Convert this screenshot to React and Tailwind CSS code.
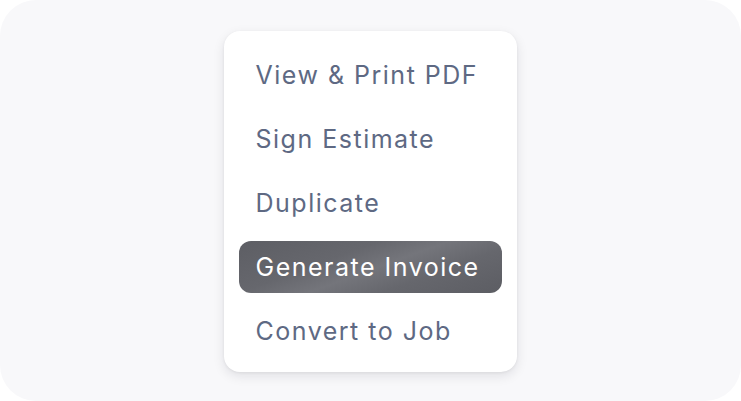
export default function App() {
  const items = ["View & Print PDF", "Sign Estimate", "Duplicate", "Generate Invoice", "Convert to Job"];
  return (
    <div className="w-[741px] h-[401px] bg-white">
      <div className="w-full h-full rounded-[36px] bg-[#f8f8fa] flex justify-center pt-[31px]" style={{ fontFamily: "Inter, 'Noto Sans', sans-serif" }}>
        <div className="w-[293px] h-[341px] ml-[-1px] bg-white rounded-[16px] shadow-[0_4px_12px_rgba(20,20,40,0.10),0_1px_3px_rgba(20,20,40,0.06)] px-[15px] pt-[12px] pb-[9px] flex flex-col">
          {items.map((t) => (
            <div key={t} className="h-16 flex items-center">
              {t === "Generate Invoice" ? (
                <div className="w-full h-[52px] rounded-[12px] px-[17px] pt-[2px] flex items-center text-white text-[25px] tracking-[1.5px] bg-[linear-gradient(160deg,#5d5e64_0%,#66676d_35%,#74757b_52%,#66676d_70%,#5c5d63_100%)]">
                  {t}
                </div>
              ) : (
                <div className="w-full h-[52px] px-[17px] pt-[2px] flex items-center text-[#5e6983] text-[25px] tracking-[1.5px]">{t}</div>
              )}
            </div>
          ))}
        </div>
      </div>
    </div>
  );
}
